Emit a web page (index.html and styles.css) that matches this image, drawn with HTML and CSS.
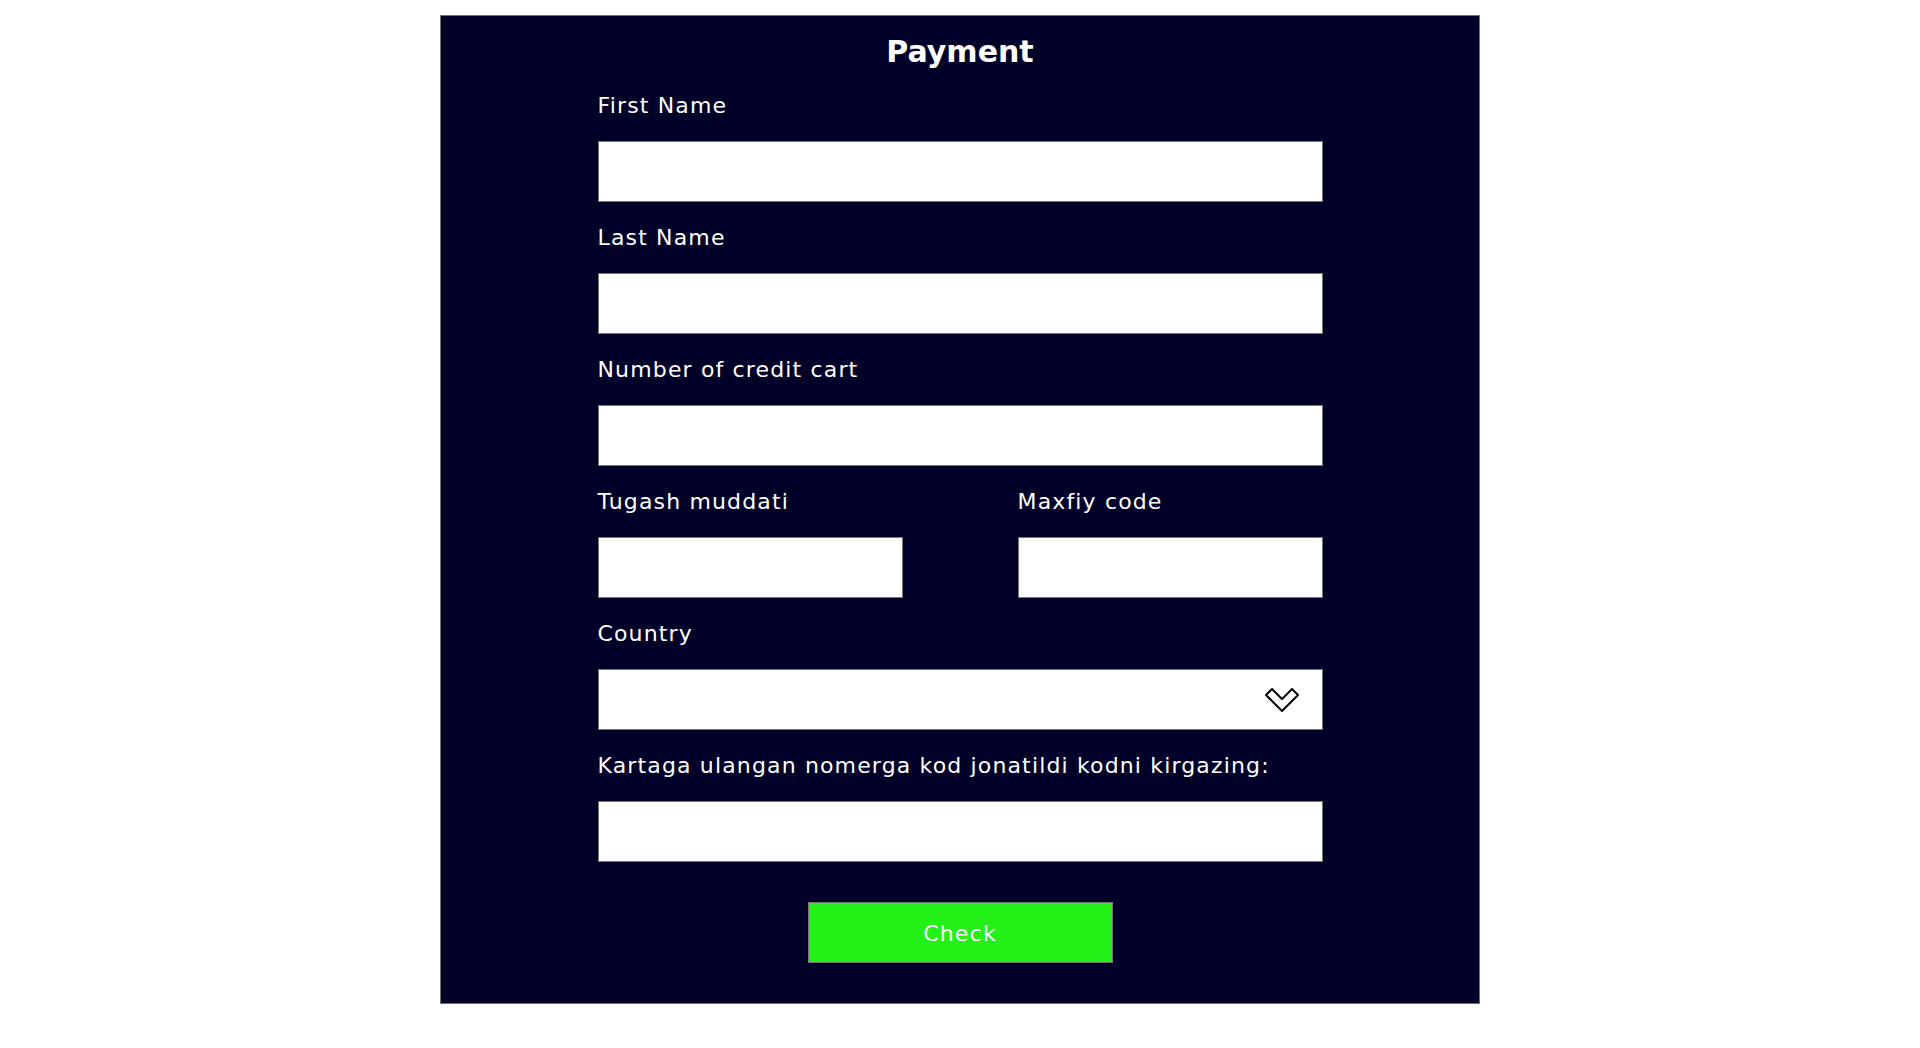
FILE: index.html
```html
<!DOCTYPE html>
<html lang="en">
<head>
<meta charset="utf-8">
<title>Payment</title>
<link rel="stylesheet" href="styles.css">
</head>
<body>
<div class="panel">
  <h1 class="title">Payment</h1>
  <form class="form">
    <div class="field">
      <label class="label">First Name</label>
      <input class="input" type="text">
    </div>
    <div class="field">
      <label class="label">Last Name</label>
      <input class="input" type="text">
    </div>
    <div class="field">
      <label class="label">Number of credit cart</label>
      <input class="input" type="text">
    </div>
    <div class="row">
      <div class="field half">
        <label class="label">Tugash muddati</label>
        <input class="input" type="text">
      </div>
      <div class="field half">
        <label class="label">Maxfiy code</label>
        <input class="input" type="text">
      </div>
    </div>
    <div class="field">
      <label class="label">Country</label>
      <div class="select">
        <svg class="chev" width="34" height="24" viewBox="0 0 34 24"><polygon points="1,7 7,1 17,11 27,1 33,7 17,23" fill="#fff" stroke="#000" stroke-width="2" stroke-linejoin="miter"/></svg>
      </div>
    </div>
    <div class="field">
      <label class="label">Kartaga ulangan nomerga kod jonatildi kodni kirgazing:</label>
      <input class="input" type="text">
    </div>
    <div class="actions">
      <button class="btn" type="button">Check</button>
    </div>
  </form>
</div>
</body>
</html>
```
FILE: styles.css
```css
html, body {
  margin: 0;
  padding: 0;
  background: #ffffff;
}
body {
  font-family: "DejaVu Sans", "Open Sans", sans-serif;
}
.panel {
  box-sizing: border-box;
  width: 1040px;
  margin: 15px auto 0;
  padding: 16px 0 40px;
  background: #000028;
  border: 1px solid #707070;
}
.title {
  margin: 0 0 18px;
  text-align: center;
  color: #ffffff;
  font-size: 30px;
  line-height: 40px;
  font-weight: 700;
}
.form {
  width: 725px;
  margin: 0 auto;
  display: flex;
  flex-direction: column;
}
.field {
  display: flex;
  flex-direction: column;
  margin-bottom: 20px;
}
.label {
  display: block;
  color: #ffffff;
  font-size: 22px;
  line-height: 30px;
  letter-spacing: 1.15px;
  padding-top: 1px;
  margin-bottom: 20px;
}
.input, .select {
  box-sizing: border-box;
  height: 61px;
  width: 100%;
  margin: 0;
  background: #ffffff;
  border: 1px solid #767676;
  font-size: 20px;
}
.select {
  display: flex;
  align-items: center;
  justify-content: flex-end;
  padding-right: 23px;
}
.chev {
  display: block;
}
.row {
  display: flex;
  justify-content: space-between;
}
.half {
  width: 305px;
}
.actions {
  display: flex;
  justify-content: center;
  margin-top: 20px;
}
.btn {
  box-sizing: border-box;
  width: 305px;
  height: 61px;
  padding-top: 2px;
  background: #22f016;
  border: 1px solid #767676;
  color: #ffffff;
  font-family: "DejaVu Sans", "Open Sans", sans-serif;
  font-size: 22px;
  letter-spacing: 1.2px;
}
```
